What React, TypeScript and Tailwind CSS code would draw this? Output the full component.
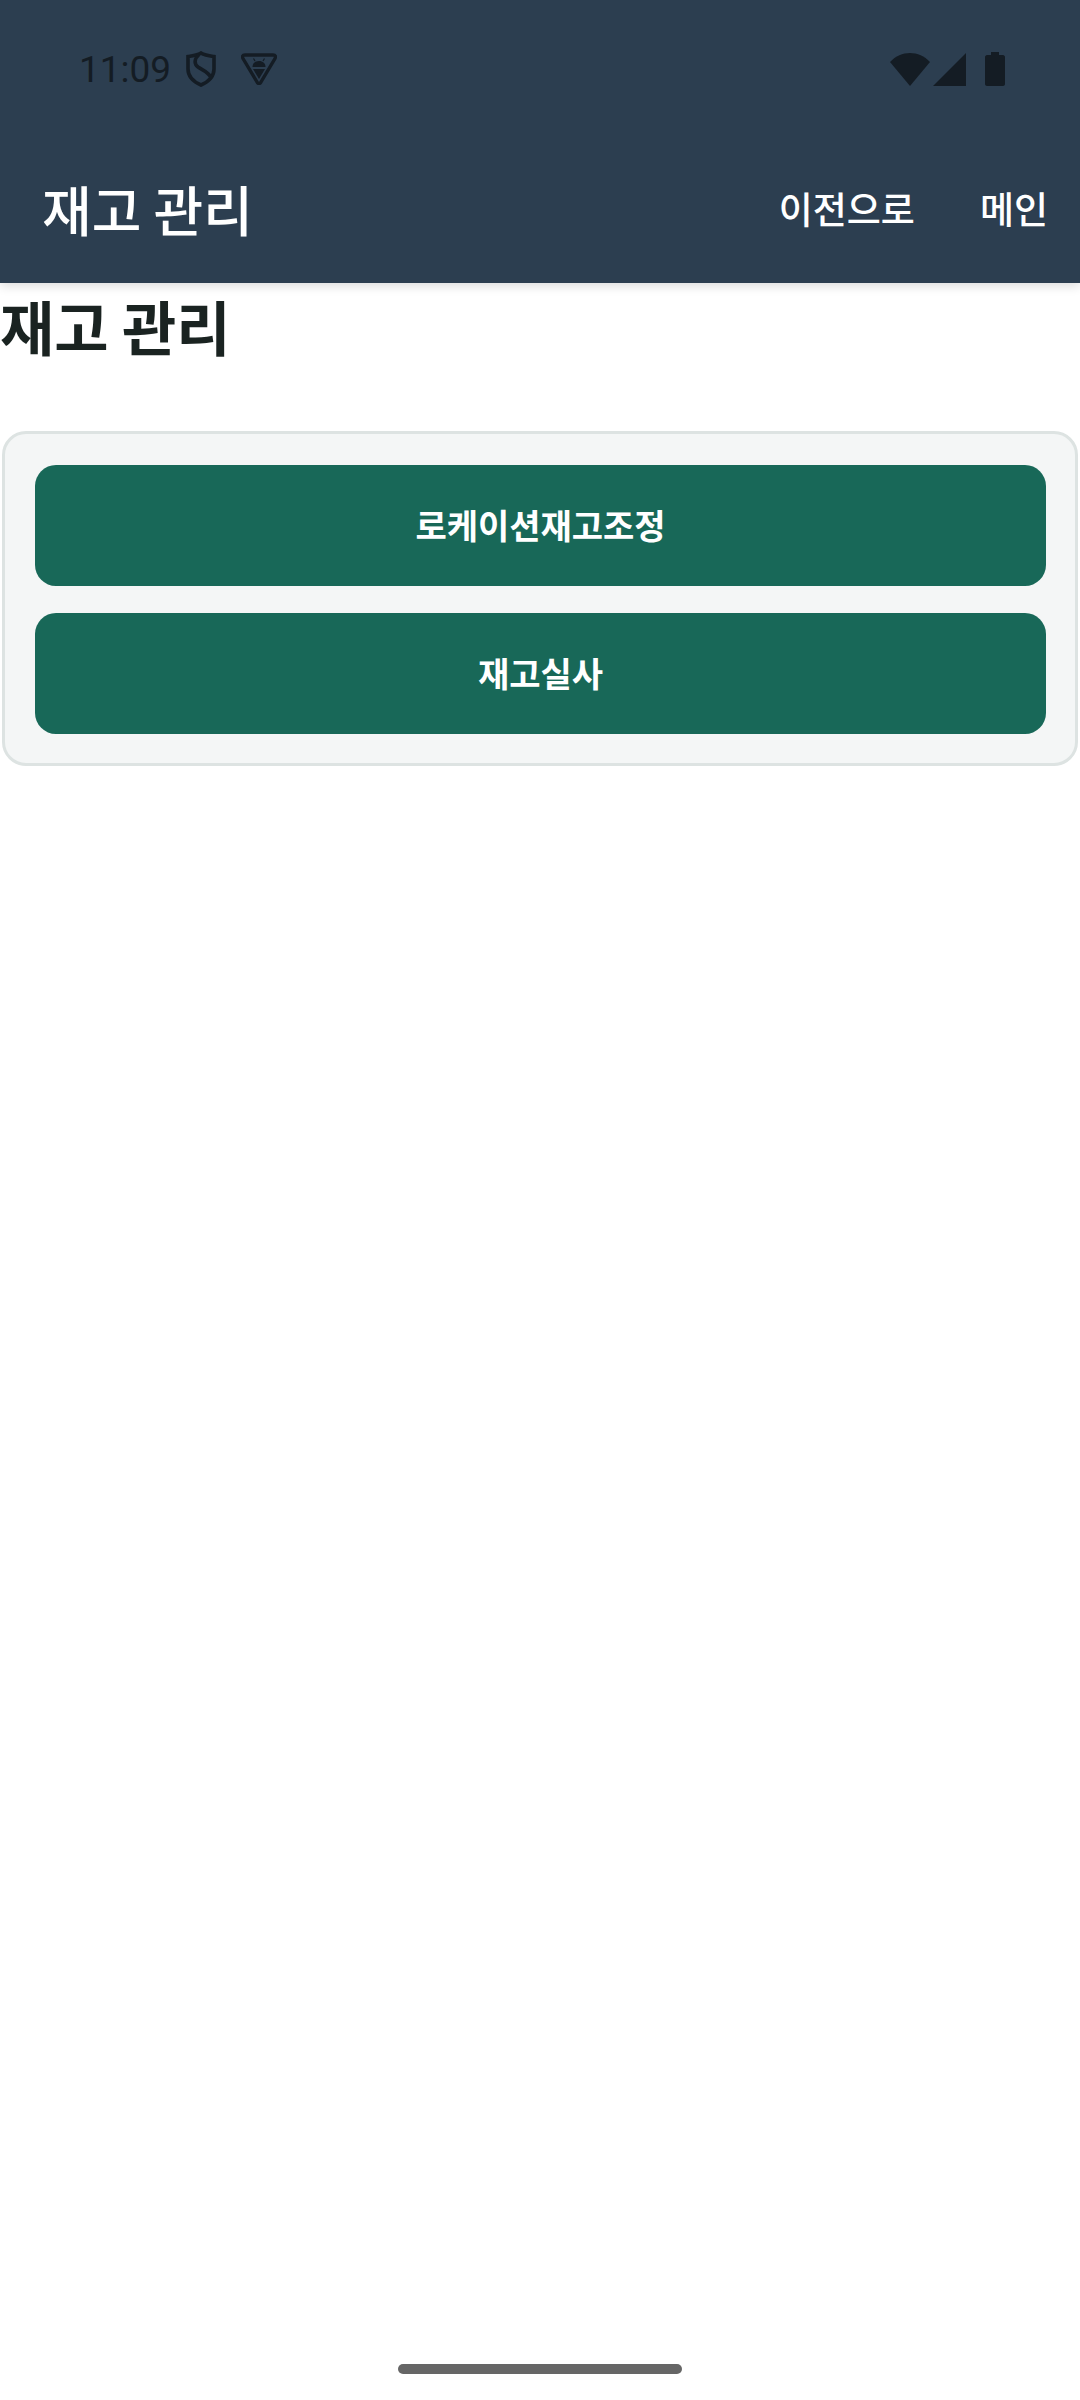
export default function App() {
  const kr = { fontFamily: '"Noto Sans CJK KR", "Noto Sans", sans-serif' };
  return (
    <div className="relative min-h-[2400px] bg-white" style={kr}>
      <header className="h-[283px] bg-[#2c3e50] shadow-[0_3px_10px_rgba(0,0,0,0.14)] flex flex-col">
        <div className="h-[138px] flex items-center pl-[79px] pr-[75px] text-[#141c24]">
          <span className="text-[37px] leading-none font-['Roboto'] font-normal">11:09</span>
          <svg className="ml-[15px]" width="30" height="36" viewBox="0 0 30 36" fill="none" stroke="#141c24" strokeWidth="3.6">
            <path d="M15 2 C19 4.5 24 5 28 5.5 V18 C28 26 22 31 15 34 C8 31 2 26 2 18 V5.5 C6 5 11 4.5 15 2Z" />
            <path d="M13 3.5 C8 8 8 13 12 16 C17 19.5 23 21 25 27" />
          </svg>
          <svg className="ml-[25px]" width="36" height="32" viewBox="0 0 36 32" fill="none">
            <path d="M4 2 H32 C34.5 2 35 3.5 34 5.5 L20 29 C19 31 17 31 16 29 L2 5.5 C1 3.5 1.5 2 4 2Z" stroke="#141c24" strokeWidth="3.4" />
            <path d="M11.5 14 C11.5 10.5 14 8 18 8 C22 8 24.5 10.5 24.5 14Z" fill="#141c24" />
            <path d="M14 8 L12.5 5.5 M22 8 L23.5 5.5" stroke="#141c24" strokeWidth="1.2" />
            <path d="M12 16 H24 L18 26Z" fill="#141c24" />
          </svg>
          <div className="ml-auto flex items-center">
            <svg width="40" height="33" viewBox="0 0 40 33">
              <path d="M0 9 C11 -3 29 -3 40 9 L20 33Z" fill="#141c24" />
            </svg>
            <svg className="ml-[3px]" width="33" height="33" viewBox="0 0 33 33">
              <path d="M33 0 V33 H0Z" fill="#141c24" />
            </svg>
            <svg className="ml-[19px]" width="20" height="34" viewBox="0 0 20 34">
              <path d="M6 0 H14 V3 H18 C19 3 20 4 20 5 V32 C20 33 19 34 18 34 H2 C1 34 0 33 0 32 V5 C0 4 1 3 2 3 H6Z" fill="#141c24" />
            </svg>
          </div>
        </div>
        <div className="flex-1 flex items-center pl-[42px] pr-[32px] pb-[4px] text-white">
          <h2 className="text-[54px] leading-none font-medium">재고 관리</h2>
          <nav className="ml-auto flex items-center gap-[65px] text-[37px] leading-none font-medium">
            <span>이전으로</span>
            <span>메인</span>
          </nav>
        </div>
      </header>
      <main>
        <h1 className="text-[59px] leading-[78px] font-bold text-[#1a2321] mt-[4px]">재고 관리</h1>
        <section className="mt-[66px] mx-[2px] h-[335px] rounded-[24px] border-[3px] border-[#dde3e2] bg-[#f4f6f6] pl-[30px] pr-[29px] pt-[31px] flex flex-col gap-[27px]">
          <button className="h-[121px] pb-[3px] rounded-[21px] bg-[#186858] text-white text-[34px] font-bold">로케이션재고조정</button>
          <button className="h-[121px] pb-[3px] rounded-[21px] bg-[#186858] text-white text-[34px] font-bold">재고실사</button>
        </section>
      </main>
      <div className="absolute left-[398px] top-[2364px] w-[284px] h-[10px] rounded-full bg-[#666666]" />
    </div>
  );
}
